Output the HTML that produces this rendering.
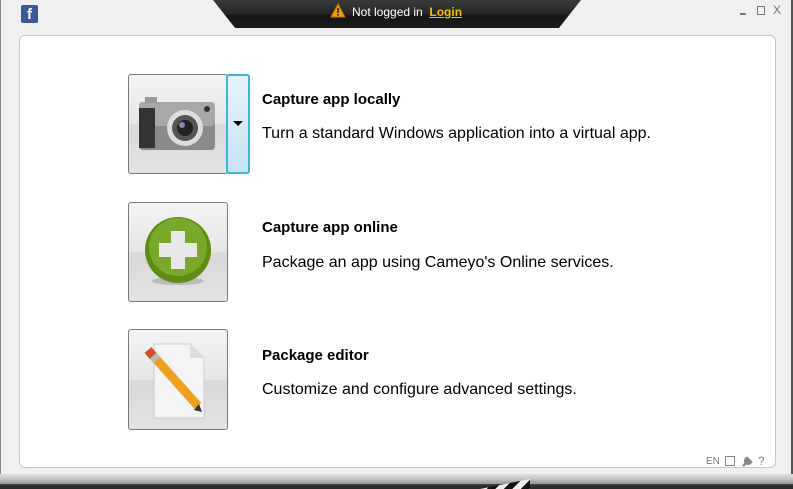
<!DOCTYPE html>
<html><head><meta charset="utf-8"><style>
*{margin:0;padding:0;box-sizing:border-box}
body{width:793px;height:489px;overflow:hidden;background:#f0f0f0;font-family:"Liberation Sans",sans-serif;position:relative}
.abs{position:absolute}
#panel{left:19px;top:35px;width:757px;height:433px;background:#fff;border:1px solid #c8c8c8;border-radius:6px}
#bottom{left:0;top:474px;width:793px;height:15px;background:linear-gradient(#e0e0e0,#c8c8c8 30%,#999 65%,#333 70%,#2a2a2a)}
#tab{left:213px;top:0;width:368px;height:28px;background:linear-gradient(#3a3a3a,#262626 50%,#151515 55%,#1c1c1c);clip-path:polygon(0 0,100% 0,94% 100%,6% 100%)}
.btn{left:128px;width:100px;border:1px solid #7a7a7a;border-radius:3px;background:linear-gradient(#f4f4f4,#e6e6e6 50%,#d9d9d9 51%,#e2e2e2)}
.t{left:262px;font-size:16px;color:#000;white-space:nowrap}
.b{font-weight:bold;font-size:15px}
</style></head><body>
<div class="abs" style="left:0;top:0;width:1px;height:489px;background:#888"></div>
<div class="abs" style="right:0;top:0;width:2px;height:489px;background:#555"></div>
<div class="abs" style="left:21px;top:5px;width:17px;height:18px;background:#3b5998;border-radius:2px;color:#fff;font-weight:bold;font-size:15px;text-align:center;line-height:20px">f</div>
<div class="abs" id="tab"></div>
<svg class="abs" style="left:330px;top:3px" width="16" height="15"><polygon points="8,1 15,14 1,14" fill="#f0a000" stroke="#c07000"/><rect x="7.2" y="5" width="1.6" height="5" fill="#222"/><rect x="7.2" y="11" width="1.6" height="1.6" fill="#222"/></svg>
<div class="abs" style="left:352px;top:5px;font-size:12px;color:#fff;white-space:nowrap">Not logged in&nbsp; <span style="color:#f5c000;text-decoration:underline;font-weight:bold">Login</span></div>
<div class="abs" style="left:740px;top:13px;width:6px;height:2px;background:#777"></div>
<div class="abs" style="left:757px;top:6px;width:8px;height:9px;border:1px solid #777"></div>
<div class="abs" style="left:773px;top:3px;font-size:12px;color:#777">X</div>
<div class="abs" id="panel"></div>

<div class="abs btn" style="top:74px;height:100px"></div>
<div class="abs" style="left:226px;top:74px;width:24px;height:100px;border:2px solid #3fb3e0;border-radius:3px;background:linear-gradient(#e8f3fa,#c6e2f2)"></div>
<div class="abs" style="left:233px;top:121px;width:0;height:0;border-left:5px solid transparent;border-right:5px solid transparent;border-top:5px solid #000"></div>
<svg class="abs" style="left:137px;top:96px" width="80" height="56">
<rect x="2" y="6" width="76" height="48" rx="4" fill="#8a8a8a"/><rect x="2" y="6" width="76" height="24" rx="4" fill="#a8a8a8"/>
<rect x="2" y="12" width="16" height="40" fill="#333"/><rect x="8" y="1" width="12" height="6" fill="#999"/>
<circle cx="48" cy="32" r="18" fill="#ddd"/><circle cx="48" cy="32" r="13" fill="#555"/><circle cx="48" cy="32" r="8" fill="#222"/><circle cx="45" cy="29" r="3" fill="#88a"/>
<circle cx="70" cy="13" r="3" fill="#333"/></svg>

<div class="abs btn" style="top:202px;height:100px"></div>
<svg class="abs" style="left:142px;top:215px" width="72" height="72"><ellipse cx="36" cy="66" rx="26" ry="4" fill="#bbb"/><circle cx="36" cy="35" r="33" fill="#5d8d12"/><circle cx="36" cy="32" r="29" fill="#7aa82a"/><path d="M29 16h14v12h12v14H43v12H29V42H17V28h12z" fill="#e8e8e8"/></svg>

<div class="abs btn" style="top:329px;height:101px"></div>
<svg class="abs" style="left:138px;top:338px" width="84" height="84"><path d="M16 6h36l14 14v60H16z" fill="#f4f4f4" stroke="#ccc"/><path d="M52 6v14h14z" fill="#ddd"/>
<line x1="10" y1="12" x2="60" y2="68" stroke="#f0a020" stroke-width="9"/><line x1="10" y1="12" x2="15" y2="18" stroke="#d05030" stroke-width="9"/><line x1="15" y1="18" x2="19" y2="22" stroke="#bbb" stroke-width="9"/><path d="M56 72l8 2-3-8z" fill="#333"/></svg>

<div class="abs t b" style="top:91px">Capture app locally</div>
<div class="abs t" style="top:125px">Turn a standard Windows application into a virtual app.</div>
<div class="abs t b" style="top:219px">Capture app online</div>
<div class="abs t" style="top:254px">Package an app using Cameyo's Online services.</div>
<div class="abs t b" style="top:347px">Package editor</div>
<div class="abs t" style="top:381px">Customize and configure advanced settings.</div>

<div class="abs" style="left:706px;top:456px;font-size:10px;color:#777">EN</div>
<div class="abs" style="left:725px;top:456px;width:10px;height:10px;border:1px solid #888"></div>
<svg class="abs" style="left:741px;top:455px" width="12" height="12"><path d="M2 11l5-5M6 3a3 3 0 1 0 4 4z" stroke="#888" stroke-width="2.5" fill="#888"/></svg>
<div class="abs" style="left:758px;top:454px;font-size:12px;color:#888">?</div>
<div class="abs" id="bottom"></div>
<div class="abs" style="left:480px;top:479px;width:50px;height:10px;background:repeating-linear-gradient(135deg,#111 0 6px,#eee 6px 12px);clip-path:polygon(0 100%,100% 0,100% 100%)"></div>
</body></html>
